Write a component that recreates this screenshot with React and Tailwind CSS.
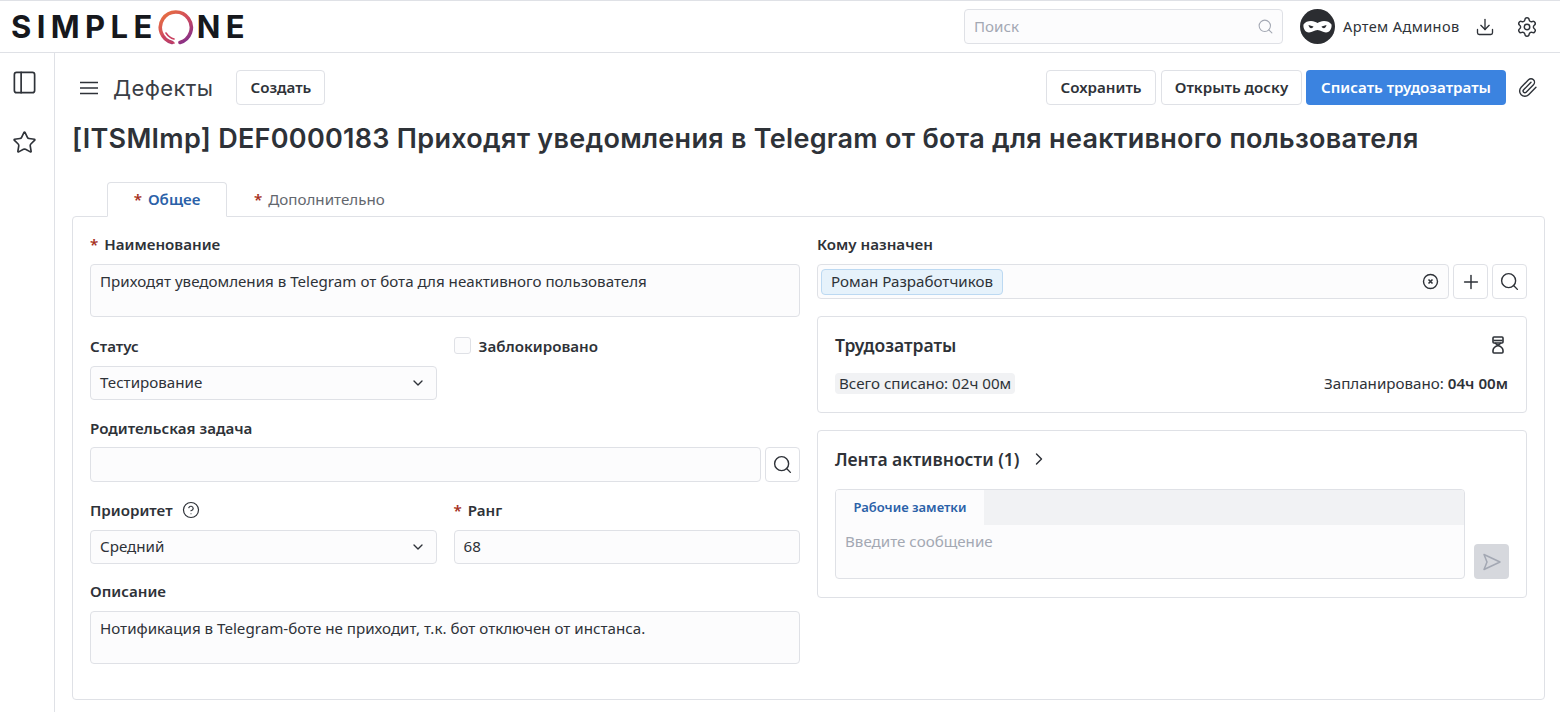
import React from "react";
import { Search, Download, Settings, PanelLeft, Star, Paperclip, Plus, ChevronRight, ChevronDown, CircleHelp } from "lucide-react";

const labelCls = "block h-5 text-[15.150px] leading-5 font-semibold text-[#2e3238]";
const inputCls = "border border-[#dfe1e6] bg-[#fcfcfd] rounded-[4px] text-[15.150px] text-[#2e3238]";
const btnCls = "h-[35px] flex items-center justify-center border border-[#dfe1e6] bg-white rounded-[4px] text-[15.150px] font-semibold text-[#2e3238]";

function Req() {
  return <span className="text-[#a6301d] font-semibold mr-[6px]">*</span>;
}

function SelectBox({ value }) {
  return (
    <div className={`${inputCls} h-[34px] flex items-center justify-between pl-[9px] pr-[10px]`}>
      <span className="pb-[2px]">{value}</span>
      <ChevronDown size={16} strokeWidth={2} className="text-[#2e3238]" />
    </div>
  );
}

function Logo() {
  const letters = "text-[31px] leading-none font-bold tracking-[5.400px] text-[#16181d]";
  return (
    <div className="flex items-center ml-[11px] font-['Inter',sans-serif]">
      <span className={letters}>SIMPLE</span>
      <svg width="38" height="38" viewBox="0 0 38 38" className="-ml-[1px] mr-[2px]">
        <defs>
          <linearGradient id="ring" x1="0.1" y1="0" x2="0.9" y2="1">
            <stop offset="0" stopColor="#e8713f" />
            <stop offset="0.5" stopColor="#cf4a5e" />
            <stop offset="1" stopColor="#7f2d8c" />
          </linearGradient>
        </defs>
        <path d="M15 34.500A15.500 15.500 0 1 1 23 34.400" fill="none" stroke="url(#ring)" strokeWidth="3.600" strokeLinecap="round" />
        <path d="M6 28c2 4 6 6 11 7M9 25c2 3 4 5 8 6" fill="none" stroke="#c9405f" strokeWidth="1.600" strokeLinecap="round" />
      </svg>
      <span className={letters}>NE</span>
    </div>
  );
}

function Avatar() {
  return (
    <svg width="35" height="35" viewBox="0 0 35 35">
      <circle cx="17.5" cy="17.5" r="17.5" fill="#2b2d31" />
      <path d="M3.500 15.500c1.500-2.500 4.500-3.500 7.500-3.500 3 0 4.500 1 6.500 2 2-1 3.500-2 6.500-2 3 0 6 1 7.500 3.500.6 3.500-1.500 8-5.500 8-3.500 0-5-2.500-8.500-2.500s-5 2.500-8.500 2.500c-4 0-6.100-4.500-5.500-8z" fill="#fff" />
      <path d="M8.500 16l5 1.500c-.5 1.200-1.300 1.700-2.300 1.700-1.300 0-2.400-1.400-2.700-3.200zM26.500 16l-5 1.500c.5 1.200 1.300 1.700 2.300 1.700 1.300 0 2.400-1.400 2.700-3.200z" fill="#2b2d31" />
    </svg>
  );
}

function Hourglass() {
  return (
    <svg width="20" height="20" viewBox="0 0 20 20" fill="none" stroke="#2e3238" strokeWidth="1.6" strokeLinejoin="round">
      <rect x="5" y="2" width="10" height="6" rx="1" />
      <path d="M5.500 5.500h9" />
      <path d="M7 8l3 2.500L13 8" />
      <path d="M10 10.500c-2.800 1-5 2.500-5 5V17a1 1 0 0 0 1 1h8a1 1 0 0 0 1-1v-1.500c0-2.500-2.200-4-5-5z" />
    </svg>
  );
}

export default function App() {
  return (
    <div className="w-[1560px] h-[712px] overflow-hidden bg-white flex flex-col font-['Noto_Sans',sans-serif] text-[#2e3238]">
      <header className="h-[53px] shrink-0 border-t border-b border-[#dfe1e6] flex items-center justify-between pr-[22px]">
        <Logo />
        <div className="flex items-center">
          <div className={`${inputCls} w-[319px] h-[35px] flex items-center justify-between pl-[9px] pr-[8px]`}>
            <span className="text-[#a3a8b3]">Поиск</span>
            <Search size={17} strokeWidth={1.5} className="text-[#a3a8b3]" />
          </div>
          <div className="ml-[17px]"><Avatar /></div>
          <span className="ml-[8px] w-[116px] whitespace-nowrap text-[14.500px] tracking-[0.4px]">Артем Админов</span>
          <Download size={20} strokeWidth={1.6} className="ml-[16px]" />
          <Settings size={22} strokeWidth={1.6} className="ml-[21px]" />
        </div>
      </header>
      <div className="flex flex-1 min-h-0">
        <aside className="w-[55px] shrink-0 border-r border-[#dfe1e6] flex flex-col items-center pt-[16px] gap-[34px]">
          <PanelLeft size={27} strokeWidth={1.5} className="-ml-[6px]" />
          <Star size={25} strokeWidth={1.6} className="-ml-[6px]" />
        </aside>
        <main className="flex-1 min-w-0 pl-[17px] pr-[15px] pt-[17px]">
          <div className="flex items-center justify-between h-[35px]">
            <div className="flex items-center">
              <svg width="20" height="20" viewBox="0 0 20 20" className="ml-[7px]" fill="none" stroke="#2e3238" strokeWidth="1.6"><path d="M1 4.500h18M1 10h18M1 15.500h18" /></svg>
              <span className="ml-[14px] text-[22px] leading-none tracking-[0.4px] font-['Inter',sans-serif] font-normal text-[#3a3e45]">Дефекты</span>
              <div className={`${btnCls} w-[89px] ml-[23px]`}>Создать</div>
            </div>
            <div className="flex items-center">
              <div className={`${btnCls} w-[110px]`}>Сохранить</div>
              <div className={`${btnCls} w-[141px] ml-[5px]`}>Открыть доску</div>
              <div className="h-[35px] w-[200px] ml-[4px] flex items-center justify-center bg-[#3b83e0] rounded-[4px] text-[15.150px] font-semibold text-white">Списать трудозатраты</div>
              <Paperclip size={21} strokeWidth={1.6} className="ml-[11px] mr-[7px]" />
            </div>
          </div>
          <h1 className="mt-[17px] h-[34px] text-[27px] leading-[34px] tracking-[0.28px] font-['Inter',sans-serif] font-semibold text-[#2e3238] whitespace-nowrap">[ITSMImp] DEF0000183 Приходят уведомления в Telegram от бота для неактивного пользователя</h1>

          <div className="mt-[26px] flex pl-[35px] h-[35px] relative z-10">
            <div className="w-[120px] h-[35px] border border-[#dfe1e6] border-b-white bg-white rounded-t-[4px] flex items-center justify-center text-[15.150px] font-semibold text-[#2a61a8]"><Req />Общее</div>
            <div className="ml-[27px] h-[35px] flex items-center text-[15.150px] text-[#63676e]"><Req />Дополнительно</div>
          </div>

          <section className="-mt-px h-[484px] border border-[#dfe1e6] rounded-[4px] bg-white px-[17px] pt-[17px] grid grid-cols-2 gap-x-[17px]">
            <div className="flex flex-col">
              <label className={labelCls}><Req />Наименование</label>
              <div className={`${inputCls} mt-[10px] h-[53px] px-[9px] pt-[6px] leading-5`}>Приходят уведомления в Telegram от бота для неактивного пользователя</div>

              <div className="mt-[19px] grid grid-cols-2 gap-x-[17px]">
                <div>
                  <label className={labelCls}>Статус</label>
                  <div className="mt-[10px]"><SelectBox value="Тестирование" /></div>
                </div>
                <div className="flex items-start gap-[8px]">
                  <span className="w-[17px] h-[17px] mt-[1px] border border-[#dfe1e6] bg-[#fcfcfd] rounded-[3px]" />
                  <span className={labelCls}>Заблокировано</span>
                </div>
              </div>

              <label className={`${labelCls} mt-[18px]`}>Родительская задача</label>
              <div className="mt-[9px] flex gap-[4px]">
                <div className={`${inputCls} flex-1 h-[35px]`} />
                <div className={`${btnCls} w-[35px]`}><Search size={21} strokeWidth={1.6} /></div>
              </div>

              <div className="mt-[18px] grid grid-cols-2 gap-x-[17px]">
                <div>
                  <label className={`${labelCls} flex items-center gap-[9px]`}>Приоритет <CircleHelp size={18} strokeWidth={1.6} /></label>
                  <div className="mt-[10px]"><SelectBox value="Средний" /></div>
                </div>
                <div>
                  <label className={labelCls}><Req />Ранг</label>
                  <div className={`${inputCls} mt-[10px] h-[34px] flex items-center px-[9px] pb-[2px]`}>68</div>
                </div>
              </div>

              <label className={`${labelCls} mt-[17px]`}>Описание</label>
              <div className={`${inputCls} mt-[10px] h-[53px] px-[9px] pt-[6px] leading-5`}>Нотификация в Telegram-боте не приходит, т.к. бот отключен от инстанса.</div>
            </div>

            <div className="flex flex-col">
              <label className={labelCls}>Кому назначен</label>
              <div className="mt-[10px] flex gap-[4px]">
                <div className={`${inputCls} flex-1 h-[35px] flex items-center justify-between pl-[3px] pr-[9px]`}>
                  <span className="h-[26px] px-[9px] flex items-center bg-[#e6f2fb] border border-[#bcd9f2] rounded-[4px]">Роман Разработчиков</span>
                  <svg width="17" height="17" viewBox="0 0 17 17" fill="none" stroke="#2e3238" strokeWidth="1.4"><circle cx="8.500" cy="8.500" r="7" /><path d="M6.500 6.500l4 4M10.500 6.500l-4 4" strokeWidth="1.600" /></svg>
                </div>
                <div className={`${btnCls} w-[35px]`}><Plus size={22} strokeWidth={1.6} /></div>
                <div className={`${btnCls} w-[35px]`}><Search size={21} strokeWidth={1.6} /></div>
              </div>

              <div className="mt-[17px] h-[97px] border border-[#dfe1e6] rounded-[4px] pl-[17px] pr-[18px] pt-[17px]">
                <div className="flex items-center justify-between h-[22px]">
                  <span className="text-[17.500px] font-semibold">Трудозатраты</span>
                  <Hourglass />
                </div>
                <div className="mt-[16px] flex items-center justify-between text-[15.150px]">
                  <span className="bg-[#f1f2f4] rounded-[4px] px-[4px] h-[21px] flex items-center">Всего списано: 02ч 00м</span>
                  <span>Запланировано: <b className="font-semibold">04ч 00м</b></span>
                </div>
              </div>

              <div className="mt-[17px] h-[168px] border border-[#dfe1e6] rounded-[4px] px-[17px] pt-[17px]">
                <div className="flex items-center h-[22px] gap-[9px]">
                  <span className="text-[17.500px] font-semibold">Лента активности (1)</span>
                  <ChevronRight size={20} strokeWidth={1.7} />
                </div>
                <div className="mt-[19px] flex items-end gap-[9px]">
                  <div className="flex-1 h-[90px] border border-[#dfe1e6] rounded-[4px] overflow-hidden bg-[#fcfcfd]">
                    <div className="h-[35px] bg-[#f1f2f4]">
                      <div className="w-[148px] h-full bg-[#fcfcfd] flex items-center justify-center text-[13px] font-semibold text-[#2a61a8]">Рабочие заметки</div>
                    </div>
                    <div className="px-[9px] pt-[6px] text-[15.150px] leading-5 text-[#a3a8b3]">Введите сообщение</div>
                  </div>
                  <div className="w-[35px] h-[35px] bg-[#d6d8dd] rounded-[4px] flex items-center justify-center">
                    <svg width="20" height="20" viewBox="0 0 20 20" fill="none" stroke="#a3a8b3" strokeWidth="1.500" strokeLinejoin="round"><path d="M2 2.500L18 10 2 17.500 5 10z" /></svg>
                  </div>
                </div>
              </div>
            </div>
          </section>
        </main>
      </div>
    </div>
  );
}
